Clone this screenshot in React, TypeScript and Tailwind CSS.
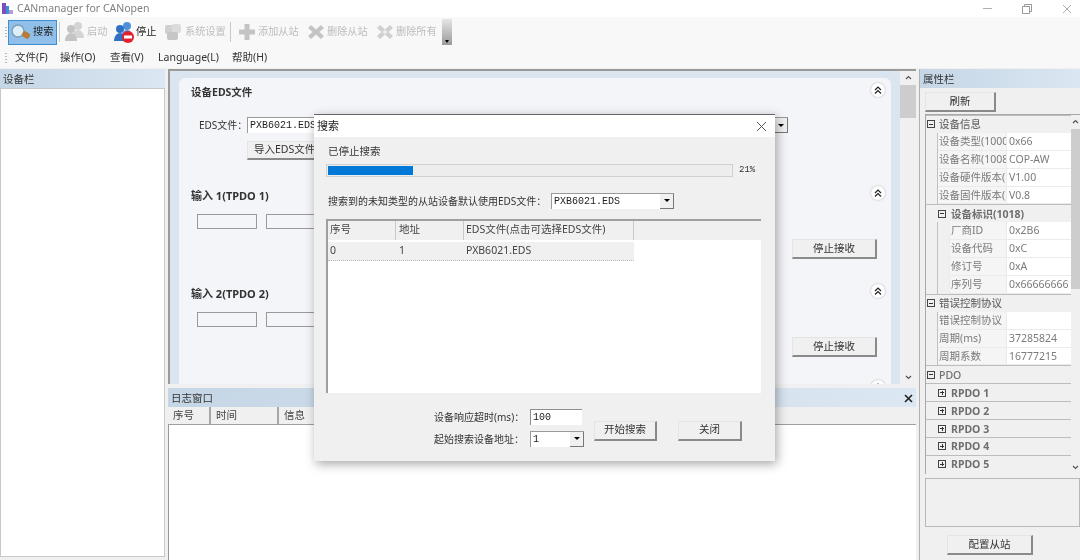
import type { ReactNode } from "react";

const mono = "font-['Liberation_Mono','Noto_Sans_CJK_SC',monospace]";

function Grip() {
  return (
    <div className="flex flex-col gap-[2px] w-[2px]">
      {[0, 1, 2, 3].map((i) => (
        <div key={i} className="h-[1px] w-[2px] bg-[#b5b5b5]" />
      ))}
    </div>
  );
}

function People({ gray }: { gray?: boolean }) {
  const a = gray ? "#c4c4c4" : "#2f6fc4";
  const b = gray ? "#d4d4d4" : "#4f8fdc";
  return (
    <svg width="20" height="22" viewBox="0 0 20 22">
      <circle cx="13" cy="5" r="4" fill={b} />
      <path d="M7 17c0-5 3-8 6-8s6 3 6 8z" fill={b} />
      <circle cx="6" cy="8" r="4" fill={a} />
      <path d="M0 20c0-5 3-8 6-8s6 3 6 8z" fill={a} />
      {!gray && <circle cx="14" cy="16" r="6" fill="#e3202c" />}
      {!gray && <rect x="10" y="14.500" width="8" height="3" fill="#fff" />}
    </svg>
  );
}

function Tool({ icon, label, active, dim, w }: { icon: ReactNode; label: string; active?: boolean; dim?: boolean; w: string }) {
  return (
    <div className={`flex items-center h-[25px] ${w} ${active ? "bg-[#90c0ea] border border-[#3c8fd2]" : ""}`}>
      {icon}
      <span className={`ml-[2px] text-[10.2px] whitespace-nowrap ${dim ? "text-[#bdbdbd]" : "text-[#222]"}`}>{label}</span>
    </div>
  );
}

function Sep() {
  return <div className="w-[1px] h-[20px] bg-[#c8c8c8]" />;
}

function WinButton({ children, w, h, className = "" }: { children: ReactNode; w: string; h: string; className?: string }) {
  return (
    <div className={`flex items-center justify-center shrink-0 ${w} ${h} bg-[#f0f0f0] border-r-2 border-b-2 border-[#8a8a8a] border-t border-l border-t-[#e4e4e4] border-l-[#e4e4e4] text-[10.5px] text-[#333] whitespace-nowrap ${className}`}>
      {children}
    </div>
  );
}

function Combo({ value, w, h = "h-[16px]" }: { value: string; w: string; h?: string }) {
  return (
    <div className={`flex items-center justify-between shrink-0 ${w} ${h} bg-white border-l border-t border-[#9a9a9a] ${mono} text-[10px] text-[#222]`}>
      <span className="pl-[2px]">{value}</span>
      <div className="flex items-center justify-center w-[14px] h-full bg-[#f0f0f0] border-r border-b border-[#777]">
        <div className="w-0 h-0 border-l-[3px] border-r-[3px] border-t-[3px] border-l-transparent border-r-transparent border-t-black" />
      </div>
    </div>
  );
}

function PanelHeader({ title, right }: { title: string; right?: ReactNode }) {
  return (
    <div className="flex items-center justify-between h-[19px] shrink-0 pl-[3px] pr-[3px] pt-[1px] bg-gradient-to-r from-[#c5d6e6] to-[#dbe7f2] text-[10.5px] leading-[16px] text-[#333]">
      <span>{title}</span>
      {right}
    </div>
  );
}

function Collapse() {
  return (
    <div className="flex items-center justify-center w-[14px] h-[14px] rounded-full bg-white shadow-[0_0_2px_#aaa]">
      <svg width="8" height="8" viewBox="0 0 8 8" fill="none" stroke="#222" strokeWidth="1.2">
        <path d="M1 4l3-3 3 3M1 7.500l3-3 3 3" />
      </svg>
    </div>
  );
}

function TpdoSection({ title, h }: { title: string; h: string }) {
  return (
    <div className={`${h} shrink-0`}>
      <div className="flex items-center justify-between h-[18px]">
        <span className="mt-[6px] text-[11px] leading-[16px] font-bold text-[#333]">{title}</span>
        <Collapse />
      </div>
      <div className="flex items-start gap-[9px] pl-[6px] pt-[12px]">
        <div className="w-[60px] h-[15px] border border-[#999]" />
        <div className="w-[60px] h-[15px] border border-[#999]" />
        <div className="flex-1" />
        <WinButton w="w-[85px]" h="h-[20px]" className="mt-[25px] mr-[8px]">停止接收</WinButton>
      </div>
    </div>
  );
}

function Minus({ plus }: { plus?: boolean }) {
  return (
    <div className="relative w-[8px] h-[8px] shrink-0 border border-[#444]">
      <div className="absolute left-[1px] top-[2.500px] w-[4px] h-[1px] bg-[#333]" />
      {plus && <div className="absolute left-[2.500px] top-[1px] w-[1px] h-[4px] bg-[#333]" />}
    </div>
  );
}

function Group({ label, sub, plus }: { label: string; sub?: boolean; plus?: boolean }) {
  return (
    <div className={`flex items-center h-[17.900px] border-t border-[#bdbdbd] bg-[#f0f0f0] ${sub ? "pl-[12px] gap-[5px]" : "pl-[1px] gap-[4px]"}`}>
      <Minus plus={plus} />
      <span className={`text-[10.5px] leading-[16px] text-[#6f6f6f] whitespace-nowrap ${sub ? "font-bold" : "font-medium"}`}>{label}</span>
    </div>
  );
}

function Prop({ label, value, deep }: { label: string; value: string; deep?: boolean }) {
  return (
    <div className="flex h-[17.900px] text-[10.5px] text-[#7b7b7b] bg-[#f0f0f0] pl-[11px]">
      <div className={`flex flex-1 min-w-0 border-l border-[#c0c0c0] ${deep ? "pl-[11px]" : ""}`}>
        <div className={`flex-1 min-w-0 overflow-hidden whitespace-nowrap bg-[#f5f5f5] border-b border-[#ebebeb] pl-[1px] leading-[17px] ${deep ? "border-l border-[#c0c0c0]" : ""}`}>{label}</div>
      </div>
      <div className="w-[65px] shrink-0 bg-white border-l border-b border-[#ebebeb] pl-[2px] leading-[17px] whitespace-nowrap">{value}</div>
    </div>
  );
}

function PropTree() {
  return (
    <div className="flex-1 min-w-0 overflow-hidden">
      <Group label="设备信息" />
      <Prop label="设备类型(1000)" value="0x66" />
      <Prop label="设备名称(1008)" value="COP-AW" />
      <Prop label="设备硬件版本(1009)" value="V1.00" />
      <Prop label="设备固件版本(100A)" value="V0.8" />
      <Group label="设备标识(1018)" sub />
      <Prop label="厂商ID" value="0x2B6" deep />
      <Prop label="设备代码" value="0xC" deep />
      <Prop label="修订号" value="0xA" deep />
      <Prop label="序列号" value="0x66666666" deep />
      <Group label="错误控制协议" />
      <Prop label="错误控制协议" value="" />
      <Prop label="周期(ms)" value="37285824" />
      <Prop label="周期系数" value="16777215" />
      <Group label="PDO" />
      <Group label="RPDO 1" sub plus />
      <Group label="RPDO 2" sub plus />
      <Group label="RPDO 3" sub plus />
      <Group label="RPDO 4" sub plus />
      <Group label="RPDO 5" sub plus />
    </div>
  );
}

function ScrollBar({ thumbH, w }: { thumbH: string; w: string }) {
  return (
    <div className={`flex flex-col items-center justify-between shrink-0 ${w} bg-[#f0f0f0]`}>
      <div className="w-full flex flex-col items-center">
        <svg width="9" height="14" viewBox="0 0 9 14" fill="none" stroke="#555" strokeWidth="1.2">
          <path d="M2 8l2.500-2.500L7 8" />
        </svg>
        <div className={`w-full ${thumbH} bg-[#cdcdcd]`} />
      </div>
      <svg width="9" height="14" viewBox="0 0 9 14" fill="none" stroke="#555" strokeWidth="1.2">
        <path d="M2 6l2.500 2.500L7 6" />
      </svg>
    </div>
  );
}

function SearchDialog() {
  return (
    <div className="absolute left-[314px] top-[114px] w-[461px] h-[347px] bg-[#f0f0f0] border-t border-[#666] shadow-[2px_3px_10px_rgba(0,0,0,0.35)]">
      <div className="flex items-center justify-between h-[22px] bg-white pl-[3px] pr-[8px] text-[11px] text-[#222]">
        <span>搜索</span>
        <svg width="11" height="11" viewBox="0 0 11 11" stroke="#555" strokeWidth="1">
          <path d="M1 1l9 9M10 1l-9 9" />
        </svg>
      </div>
      <div className="pl-[12px] pr-[14px]">
        <div className="pl-[2px] pt-[7px] h-[27px] text-[10.5px] text-[#333]">已停止搜索</div>
        <div className="flex items-center gap-[6px]">
          <div className="w-[407px] h-[13px] bg-[#ededed] border border-[#d0d0d0] p-[1px]">
            <div className="w-[21%] h-full bg-[#0078d7]" />
          </div>
          <span className={`${mono} text-[9px] text-[#333]`}>21%</span>
        </div>
        <div className="flex items-center gap-[8px] pt-[15px] pl-[2px]">
          <span className="text-[10px] leading-[16px] text-[#333] w-[215px] whitespace-nowrap">搜索到的未知类型的从站设备默认使用EDS文件：</span>
          <Combo value="PXB6021.EDS" w="w-[123px]" />
        </div>
        <div className="mt-[10px] h-[174px] bg-white border-t-2 border-l-2 border-[#9f9f9f]">
          <div className="flex h-[19px] bg-[#f0f0f0] text-[10.5px] leading-[17px] text-[#444]">
            <div className="w-[68px] pl-[2px] border-r border-[#c8c8c8]">序号</div>
            <div className="w-[68px] pl-[3px] border-r border-[#c8c8c8]">地址</div>
            <div className="w-[170px] pl-[2px] border-r border-[#c8c8c8] whitespace-nowrap">EDS文件(点击可选择EDS文件)</div>
          </div>
          <div className="flex mt-[2px] h-[19px] w-[306px] bg-[#f0f0f0] border-b border-dotted border-[#bbb] text-[10.5px] leading-[17px] text-[#444]">
            <div className="w-[68px] pl-[2px]">0</div>
            <div className="w-[68px] pl-[3px]">1</div>
            <div className="pl-[2px]">PXB6021.EDS</div>
          </div>
        </div>
        <div className="flex items-center pt-[16px] pl-[108px]">
          <div className="flex flex-col gap-[6px] w-[96px] shrink-0">
            <div className="flex items-center gap-[10px]">
              <span className="w-[86px] shrink-0 whitespace-nowrap text-[10px] leading-[16px] text-[#333]">设备响应超时(ms)：</span>
              <div className={`w-[52px] h-[16px] shrink-0 bg-white border-l border-t border-[#8f8f8f] pl-[2px] ${mono} text-[10px] leading-[15px] text-[#222]`}>100</div>
            </div>
            <div className="flex items-center gap-[10px]">
              <span className="w-[86px] shrink-0 whitespace-nowrap text-[10px] leading-[16px] text-[#333]">起始搜索设备地址：</span>
              <Combo value="1" w="w-[54px]" />
            </div>
          </div>
          <div className="flex gap-[21px] pl-[64px] mt-[6px]">
            <WinButton w="w-[63px]" h="h-[20px]">开始搜索</WinButton>
            <WinButton w="w-[64px]" h="h-[20px]">关闭</WinButton>
          </div>
        </div>
      </div>
    </div>
  );
}

export default function App() {
  return (
    <div className="relative w-[1080px] h-[560px] overflow-hidden flex flex-col bg-[#f0f0f0] blur-[0.5px] font-['Noto_Sans','Noto_Sans_CJK_SC',sans-serif]">
      {/* title bar */}
      <div className="flex items-center justify-between h-[17px] shrink-0 bg-white pr-[8px]">
        <div className="flex items-center gap-[3px] pl-[1px]">
          <svg width="13" height="13" viewBox="0 0 13 13">
            <rect x="1" y="1" width="4" height="11" fill="#7a4fc0" />
            <rect x="5" y="4" width="3" height="8" fill="#3d8fd8" />
            <rect x="8" y="8" width="4" height="4" fill="#b59ad8" />
          </svg>
          <span className="text-[10.5px] text-[#808080]">CANmanager for CANopen</span>
        </div>
        <div className="flex items-center">
          <div className="w-[9px] h-[1px] bg-[#b0b0b0] mr-[30px]" />
          <svg width="10" height="10" viewBox="0 0 10 10" fill="none" stroke="#999" className="mr-[30px]">
            <path d="M.5 2.500h7v7h-7zM2.500 2.500v-2h7v7h-2" />
          </svg>
          <svg width="10" height="10" viewBox="0 0 10 10" stroke="#aaa">
            <path d="M1 1l8 8M9 1L1 9" />
          </svg>
        </div>
      </div>

      {/* toolbar */}
      <div className="flex items-center h-[30px] shrink-0 bg-[#f8f8f8] pl-[5px]">
        <Grip />
        <div className="flex items-center gap-[1px] ml-[1px]">
          <Tool
            active
            w="w-[49px] pl-[2px]"
            label="搜索"
            icon={
              <svg width="20" height="20" viewBox="0 0 20 20">
                <circle cx="7" cy="9" r="6" fill="#dceef9" stroke="#7d9db8" strokeWidth="1.500" />
                <rect x="11" y="10" width="8" height="6" rx="2" fill="#b87a3a" transform="rotate(30 15 13)" />
              </svg>
            }
          />
          <div className="ml-[1px]"><Sep /></div>
        </div>
        <div className="ml-[5px]"><Tool dim w="w-[49px]" label="启动" icon={<People gray />} /></div>
        <Tool w="w-[49px]" label="停止" icon={<People />} />
        <Tool
          dim
          w="w-[67px]"
          label="系统设置"
          icon={
            <svg width="20" height="20" viewBox="0 0 20 20" fill="#d0d0d0">
              <rect x="2" y="3" width="9" height="9" rx="2" />
              <rect x="9" y="2" width="9" height="9" rx="2" fill="#dcdcdc" />
              <rect x="4" y="10" width="11" height="8" rx="2" fill="#c6c6c6" />
            </svg>
          }
        />
        <Sep />
        <div className="ml-[7px]">
          <Tool
            dim
            w="w-[69px]"
            label="添加从站"
            icon={
              <svg width="18" height="18" viewBox="0 0 18 18" fill="#c4c4c4">
                <path d="M6.500 1h5v5.500H17v5h-5.500V17h-5v-5.500H1v-5h5.500z" />
              </svg>
            }
          />
        </div>
        <Tool
          dim
          w="w-[69px]"
          label="删除从站"
          icon={
            <svg width="18" height="18" viewBox="0 0 18 18" fill="#c4c4c4">
              <path d="M4 2l5 4.500L14 2l3 3-4.500 4 4.500 4-3 3-5-4.500L4 16l-3-3 4.500-4L1 5z" />
            </svg>
          }
        />
        <Tool
          dim
          w="w-[66px]"
          label="删除所有"
          icon={
            <svg width="18" height="18" viewBox="0 0 18 18" fill="#cfcfcf">
              <path d="M4 2l5 4.500L14 2l3 3-4.500 4 4.500 4-3 3-5-4.500L4 16l-3-3 4.500-4L1 5z" />
              <circle cx="9" cy="9" r="2" fill="#eee" />
            </svg>
          }
        />
        <div className="flex items-end justify-center w-[10px] h-[26px] bg-gradient-to-b from-[#e6e6e6] to-[#9a9a9a] pb-[2px]">
          <div className="w-0 h-0 border-l-[2.500px] border-r-[2.500px] border-t-[3px] border-l-transparent border-r-transparent border-t-black" />
        </div>
      </div>

      {/* menu */}
      <div className="flex items-center h-[21px] shrink-0 bg-[#f8f8f8] pl-[5px] text-[10.5px] text-[#333]">
        <Grip />
        <span className="ml-[8px] w-[45px]">文件(F)</span>
        <span className="w-[50px]">操作(O)</span>
        <span className="w-[48px]">查看(V)</span>
        <span className="w-[74px]">Language(L)</span>
        <span>帮助(H)</span>
      </div>

      {/* body */}
      <div className="flex flex-1 min-h-0 pt-[1px]">
        {/* left */}
        <div className="flex flex-col w-[165px] shrink-0 pb-[3px]">
          <PanelHeader title="设备栏" />
          <div className="flex-1 bg-white border border-[#c8c8c8]" />
        </div>

        {/* center */}
        <div className="flex flex-col w-[748px] shrink-0 ml-[3px]">
          <div className="flex h-[315px] shrink-0 border-t-2 border-l-2 border-[#9a9a9a] bg-[#dbe5ef]">
            <div className="flex-1 min-w-0 pt-[7px] pl-[9px] pr-[9px] overflow-hidden">
              <div className="h-full rounded-t-[6px] bg-[#f3f5f9] pl-[12px] pr-[6px] pt-[3px] overflow-hidden">
                <div className="h-[103px] shrink-0">
                  <div className="flex items-center justify-between h-[18px]">
                    <span className="mt-[4px] text-[10.5px] leading-[16px] font-bold text-[#333]">设备EDS文件</span>
                    <Collapse />
                  </div>
                  <div className="flex items-center pt-[18px] pl-[8px]">
                    <span className="w-[48px] shrink-0 whitespace-nowrap text-[10px] leading-[16px] text-[#333]">EDS文件：</span>
                    <Combo value="PXB6021.EDS" w="w-[541px]" />
                  </div>
                  <div className="pl-[56px] pt-[8px]">
                    <WinButton w="w-[80px]" h="h-[19px]" className="pl-[6px] justify-start">导入EDS文件</WinButton>
                  </div>
                </div>
                <TpdoSection title="输入 1(TPDO 1)" h="h-[98px]" />
                <TpdoSection title="输入 2(TPDO 2)" h="h-[98px]" />
                <div className="flex justify-end">
                  <Collapse />
                </div>
              </div>
            </div>
            <ScrollBar w="w-[16px]" thumbH="h-[33px]" />
          </div>

          <div className="flex flex-col flex-1 min-h-0 mt-[4px]">
            <PanelHeader
              title="日志窗口"
              right={
                <svg width="9" height="9" viewBox="0 0 9 9" stroke="#222" strokeWidth="1.600">
                  <path d="M1 1l7 7M8 1L1 8" />
                </svg>
              }
            />
            <div className="flex h-[18px] shrink-0 bg-[#f0f0f0] border-b border-[#9f9f9f] text-[10.5px] leading-[17px] text-[#444]">
              <div className="w-[43px] pl-[5px] border-r-2 border-[#a8a8a8] bg-[#f0f0f0]">序号</div>
              <div className="w-[68px] pl-[5px] border-r-2 border-[#a8a8a8]">时间</div>
              <div className="flex-1 pl-[5px]">信息</div>
            </div>
            <div className="flex-1 bg-white border-l border-[#999]" />
          </div>
        </div>

        {/* right */}
        <div className="flex flex-col flex-1 min-w-0 ml-[3px] border-l border-[#b0b0b0]">
          <PanelHeader title="属性栏" />
          <div className="pl-[5px] pt-[4px]">
            <WinButton w="w-[71px]" h="h-[20px]">刷新</WinButton>
          </div>
          <div className="flex h-[360px] shrink-0 ml-[5px] mt-[2px] border-l border-t border-[#a8a8a8]">
            <PropTree />
            <ScrollBar w="w-[9px]" thumbH="h-[160px]" />
          </div>
          <div className="h-[49px] shrink-0 ml-[5px] mt-[4px] border border-[#b8b8b8]" />
          <div className="pl-[27px] pt-[8px]">
            <WinButton w="w-[86px]" h="h-[20px]">配置从站</WinButton>
          </div>
        </div>
      </div>

      <SearchDialog />
    </div>
  );
}
